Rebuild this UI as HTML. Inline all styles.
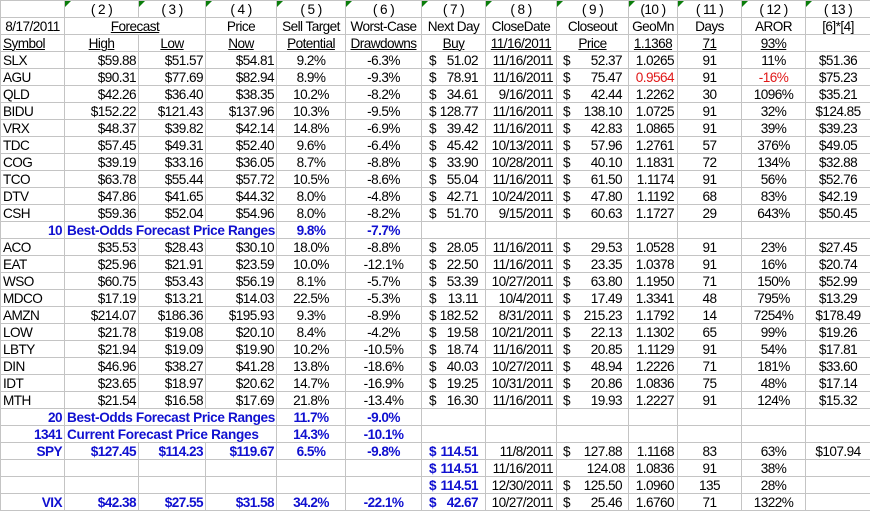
<!DOCTYPE html>
<html><head><meta charset="utf-8"><style>
html,body{margin:0;padding:0;background:#fff;width:870px;height:511px;overflow:hidden}
table{position:absolute;left:0;top:0;border-collapse:separate;border-spacing:0;table-layout:fixed;width:870px;border-top:1px solid #c4c4c4;border-left:1px solid #c4c4c4;font:13.6px/14px "Liberation Sans",Arial,sans-serif;letter-spacing:-.56px;color:#000}
td{box-sizing:border-box;height:17px;padding:2px 2px 0 2px;border-right:1px solid #c4c4c4;border-bottom:1px solid #c4c4c4;white-space:nowrap;text-align:center;vertical-align:top;position:relative}
td:last-child{border-right:0}
u{text-decoration:underline;text-underline-offset:1px;text-decoration-thickness:1px}
.t td+td::before{content:"";position:absolute;left:0;top:0;border-top:6px solid #0a7d0a;border-right:6px solid transparent;width:0;height:0}
.d td:nth-child(1){text-align:left;padding-left:2px}
.d td:nth-child(2),.d td:nth-child(3),.d td:nth-child(4){text-align:right;padding-right:2px}
.d td:nth-child(7){text-align:right;padding-right:7px;padding-left:7px}
.d td:nth-child(8){text-align:right;padding-right:3px}
.d td:nth-child(9){text-align:right;padding-right:6px;padding-left:6px}
.d td:nth-child(10){text-align:right;padding-right:3px}
s{float:left;text-decoration:none}
.k,.k td{color:#1010d0;font-weight:bold}
.d td.k:nth-child(1),td.n{text-align:right;padding-right:2px}
td.k.n,td.x{text-align:left;letter-spacing:-.36px}
td.n{text-align:right}
.d td.p:nth-child(9){padding-right:3px}
.e{color:#e01818}
</style></head><body>
<table>
<colgroup><col style="width:64px"><col style="width:74px"><col style="width:67px"><col style="width:71px"><col style="width:69px"><col style="width:76px"><col style="width:64px"><col style="width:71px"><col style="width:72px"><col style="width:49px"><col style="width:64px"><col style="width:64px"><col style="width:64px"></colgroup>
<tr class="t"><td></td><td>( 2 )</td><td>( 3 )</td><td>( 4 )</td><td>( 5 )</td><td>( 6 )</td><td>( 7 )</td><td>( 8 )</td><td>( 9 )</td><td>(10 )</td><td>( 11 )</td><td>( 12 )</td><td>( 13 )</td></tr>
<tr><td>8/17/2011</td><td colspan="2"><u>Forecast</u></td><td>Price</td><td>Sell Target</td><td>Worst-Case</td><td>Next Day</td><td>CloseDate</td><td>Closeout</td><td>GeoMn</td><td>Days</td><td>AROR</td><td>[6]*[4]</td></tr>
<tr><td style="text-align:left"><u>Symbol</u></td><td><u>High</u></td><td><u>Low</u></td><td><u>Now</u></td><td><u>Potential</u></td><td><u>Drawdowns</u></td><td><u>Buy</u></td><td><u>11/16/2011</u></td><td><u>Price</u></td><td><u>1.1368</u></td><td><u>71</u></td><td><u>93%</u></td><td></td></tr>
<tr class="d"><td>SLX</td><td>$59.88</td><td>$51.57</td><td>$54.81</td><td>9.2%</td><td>-6.3%</td><td><s>$</s>51.02</td><td>11/16/2011</td><td><s>$</s>52.37</td><td>1.0265</td><td>91</td><td>11%</td><td>$51.36</td></tr>
<tr class="d"><td>AGU</td><td>$90.31</td><td>$77.69</td><td>$82.94</td><td>8.9%</td><td>-9.3%</td><td><s>$</s>78.91</td><td>11/16/2011</td><td><s>$</s>75.47</td><td class="e">0.9564</td><td>91</td><td class="e">-16%</td><td>$75.23</td></tr>
<tr class="d"><td>QLD</td><td>$42.26</td><td>$36.40</td><td>$38.35</td><td>10.2%</td><td>-8.2%</td><td><s>$</s>34.61</td><td>9/16/2011</td><td><s>$</s>42.44</td><td>1.2262</td><td>30</td><td>1096%</td><td>$35.21</td></tr>
<tr class="d"><td>BIDU</td><td>$152.22</td><td>$121.43</td><td>$137.96</td><td>10.3%</td><td>-9.5%</td><td><s>$</s>128.77</td><td>11/16/2011</td><td><s>$</s>138.10</td><td>1.0725</td><td>91</td><td>32%</td><td>$124.85</td></tr>
<tr class="d"><td>VRX</td><td>$48.37</td><td>$39.82</td><td>$42.14</td><td>14.8%</td><td>-6.9%</td><td><s>$</s>39.42</td><td>11/16/2011</td><td><s>$</s>42.83</td><td>1.0865</td><td>91</td><td>39%</td><td>$39.23</td></tr>
<tr class="d"><td>TDC</td><td>$57.45</td><td>$49.31</td><td>$52.40</td><td>9.6%</td><td>-6.4%</td><td><s>$</s>45.42</td><td>10/13/2011</td><td><s>$</s>57.96</td><td>1.2761</td><td>57</td><td>376%</td><td>$49.05</td></tr>
<tr class="d"><td>COG</td><td>$39.19</td><td>$33.16</td><td>$36.05</td><td>8.7%</td><td>-8.8%</td><td><s>$</s>33.90</td><td>10/28/2011</td><td><s>$</s>40.10</td><td>1.1831</td><td>72</td><td>134%</td><td>$32.88</td></tr>
<tr class="d"><td>TCO</td><td>$63.78</td><td>$55.44</td><td>$57.72</td><td>10.5%</td><td>-8.6%</td><td><s>$</s>55.04</td><td>11/16/2011</td><td><s>$</s>61.50</td><td>1.1174</td><td>91</td><td>56%</td><td>$52.76</td></tr>
<tr class="d"><td>DTV</td><td>$47.86</td><td>$41.65</td><td>$44.32</td><td>8.0%</td><td>-4.8%</td><td><s>$</s>42.71</td><td>10/24/2011</td><td><s>$</s>47.80</td><td>1.1192</td><td>68</td><td>83%</td><td>$42.19</td></tr>
<tr class="d"><td>CSH</td><td>$59.36</td><td>$52.04</td><td>$54.96</td><td>8.0%</td><td>-8.2%</td><td><s>$</s>51.70</td><td>9/15/2011</td><td><s>$</s>60.63</td><td>1.1727</td><td>29</td><td>643%</td><td>$50.45</td></tr>
<tr class="k"><td class="n">10</td><td colspan="3" class="x">Best-Odds Forecast Price Ranges</td><td>9.8%</td><td>-7.7%</td><td></td><td></td><td></td><td></td><td></td><td></td><td></td></tr>
<tr class="d"><td>ACO</td><td>$35.53</td><td>$28.43</td><td>$30.10</td><td>18.0%</td><td>-8.8%</td><td><s>$</s>28.05</td><td>11/16/2011</td><td><s>$</s>29.53</td><td>1.0528</td><td>91</td><td>23%</td><td>$27.45</td></tr>
<tr class="d"><td>EAT</td><td>$25.96</td><td>$21.91</td><td>$23.59</td><td>10.0%</td><td>-12.1%</td><td><s>$</s>22.50</td><td>11/16/2011</td><td><s>$</s>23.35</td><td>1.0378</td><td>91</td><td>16%</td><td>$20.74</td></tr>
<tr class="d"><td>WSO</td><td>$60.75</td><td>$53.43</td><td>$56.19</td><td>8.1%</td><td>-5.7%</td><td><s>$</s>53.39</td><td>10/27/2011</td><td><s>$</s>63.80</td><td>1.1950</td><td>71</td><td>150%</td><td>$52.99</td></tr>
<tr class="d"><td>MDCO</td><td>$17.19</td><td>$13.21</td><td>$14.03</td><td>22.5%</td><td>-5.3%</td><td><s>$</s>13.11</td><td>10/4/2011</td><td><s>$</s>17.49</td><td>1.3341</td><td>48</td><td>795%</td><td>$13.29</td></tr>
<tr class="d"><td>AMZN</td><td>$214.07</td><td>$186.36</td><td>$195.93</td><td>9.3%</td><td>-8.9%</td><td><s>$</s>182.52</td><td>8/31/2011</td><td><s>$</s>215.23</td><td>1.1792</td><td>14</td><td>7254%</td><td>$178.49</td></tr>
<tr class="d"><td>LOW</td><td>$21.78</td><td>$19.08</td><td>$20.10</td><td>8.4%</td><td>-4.2%</td><td><s>$</s>19.58</td><td>10/21/2011</td><td><s>$</s>22.13</td><td>1.1302</td><td>65</td><td>99%</td><td>$19.26</td></tr>
<tr class="d"><td>LBTY</td><td>$21.94</td><td>$19.09</td><td>$19.90</td><td>10.2%</td><td>-10.5%</td><td><s>$</s>18.74</td><td>11/16/2011</td><td><s>$</s>20.85</td><td>1.1129</td><td>91</td><td>54%</td><td>$17.81</td></tr>
<tr class="d"><td>DIN</td><td>$46.96</td><td>$38.27</td><td>$41.28</td><td>13.8%</td><td>-18.6%</td><td><s>$</s>40.03</td><td>10/27/2011</td><td><s>$</s>48.94</td><td>1.2226</td><td>71</td><td>181%</td><td>$33.60</td></tr>
<tr class="d"><td>IDT</td><td>$23.65</td><td>$18.97</td><td>$20.62</td><td>14.7%</td><td>-16.9%</td><td><s>$</s>19.25</td><td>10/31/2011</td><td><s>$</s>20.86</td><td>1.0836</td><td>75</td><td>48%</td><td>$17.14</td></tr>
<tr class="d"><td>MTH</td><td>$21.54</td><td>$16.58</td><td>$17.69</td><td>21.8%</td><td>-13.4%</td><td><s>$</s>16.30</td><td>11/16/2011</td><td><s>$</s>19.93</td><td>1.2227</td><td>91</td><td>124%</td><td>$15.32</td></tr>
<tr class="k"><td class="n">20</td><td colspan="3" class="x">Best-Odds Forecast Price Ranges</td><td>11.7%</td><td>-9.0%</td><td></td><td></td><td></td><td></td><td></td><td></td><td></td></tr>
<tr class="k"><td class="n">1341</td><td colspan="3" class="x" style="letter-spacing:-.27px">Current Forecast Price Ranges</td><td>14.3%</td><td>-10.1%</td><td></td><td></td><td></td><td></td><td></td><td></td><td></td></tr>
<tr class="d"><td class="k">SPY</td><td class="k">$127.45</td><td class="k">$114.23</td><td class="k">$119.67</td><td class="k">6.5%</td><td class="k">-9.8%</td><td class="k"><s>$</s>114.51</td><td>11/8/2011</td><td><s>$</s>127.88</td><td>1.1168</td><td>83</td><td>63%</td><td>$107.94</td></tr>
<tr class="d"><td></td><td></td><td></td><td></td><td></td><td></td><td class="k"><s>$</s>114.51</td><td>11/16/2011</td><td class="p">124.08</td><td>1.0836</td><td>91</td><td>38%</td><td></td></tr>
<tr class="d"><td></td><td></td><td></td><td></td><td></td><td></td><td class="k"><s>$</s>114.51</td><td>12/30/2011</td><td><s>$</s>125.50</td><td>1.0960</td><td>135</td><td>28%</td><td></td></tr>
<tr class="d"><td class="k">VIX</td><td class="k">$42.38</td><td class="k">$27.55</td><td class="k">$31.58</td><td class="k">34.2%</td><td class="k">-22.1%</td><td class="k"><s>$</s>42.67</td><td>10/27/2011</td><td><s>$</s>25.46</td><td>1.6760</td><td>71</td><td>1322%</td><td></td></tr>
</table>
</body></html>
